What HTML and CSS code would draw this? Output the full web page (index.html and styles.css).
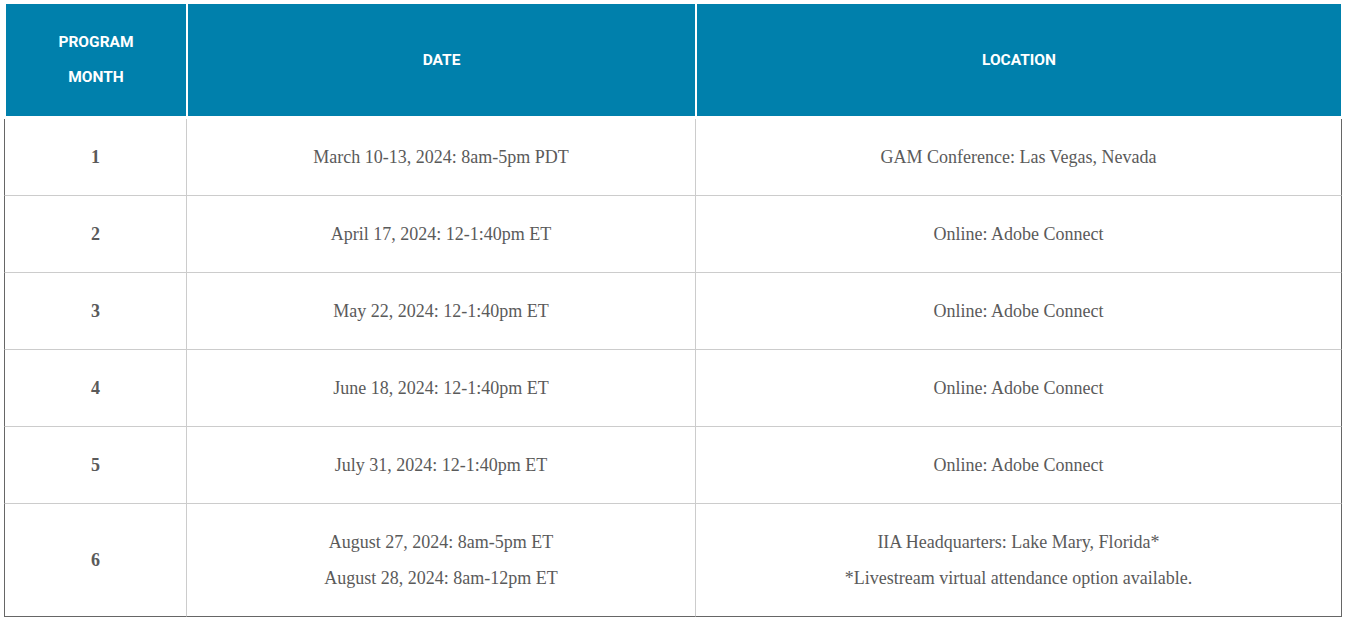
FILE: index.html
```html
<!DOCTYPE html>
<html>
<head>
<meta charset="utf-8">
<link rel="stylesheet" href="styles.css">
</head>
<body>
<div class="wrap">
<table class="sched">
  <colgroup>
    <col class="c1"><col class="c2"><col class="c3">
  </colgroup>
  <thead>
    <tr>
      <th class="h1">PROGRAM<br>MONTH</th>
      <th class="h2">DATE</th>
      <th class="h3">LOCATION</th>
    </tr>
  </thead>
  <tbody>
    <tr><td class="num">1</td><td class="mid">March 10-13, 2024: 8am-5pm PDT</td><td class="loc">GAM Conference: Las Vegas, Nevada</td></tr>
    <tr><td class="num">2</td><td class="mid">April 17, 2024: 12-1:40pm ET</td><td class="loc">Online: Adobe Connect</td></tr>
    <tr><td class="num">3</td><td class="mid">May 22, 2024: 12-1:40pm ET</td><td class="loc">Online: Adobe Connect</td></tr>
    <tr><td class="num">4</td><td class="mid">June 18, 2024: 12-1:40pm ET</td><td class="loc">Online: Adobe Connect</td></tr>
    <tr><td class="num">5</td><td class="mid">July 31, 2024: 12-1:40pm ET</td><td class="loc">Online: Adobe Connect</td></tr>
    <tr class="last"><td class="num">6</td><td class="mid">August 27, 2024: 8am-5pm ET<br>August 28, 2024: 8am-12pm ET</td><td class="loc">IIA Headquarters: Lake Mary, Florida*<br>*Livestream virtual attendance option available.</td></tr>
  </tbody>
</table>
</div>
</body>
</html>
```
FILE: styles.css
```css
html, body {
  margin: 0;
  padding: 0;
  background: #ffffff;
}
.wrap {
  padding: 4px 0 0 4px;
}
.sched {
  border-collapse: separate;
  border-spacing: 0;
  table-layout: fixed;
  width: 1338px;
}
.c1 { width: 182px; }
.c2 { width: 510px; }
.c3 { width: 646px; }
.sched th {
  background: #0080ac;
  color: #ffffff;
  font-family: Roboto, "Liberation Sans", sans-serif;
  font-weight: 700;
  font-size: 15.5px;
  line-height: 35px;
  height: 112px;
  padding: 0;
  text-align: center;
  vertical-align: middle;
  border-bottom: 3px solid #ffffff;
  box-sizing: content-box;
}
.sched th.h1 {
  border-left: 2px solid #ffffff;
}
.sched th.h2 {
  border-left: 2px solid #ffffff;
  border-right: 1px solid #ffffff;
}
.sched th.h3 {
  border-left: 1px solid #ffffff;
  border-right: 1px solid #ffffff;
}
.sched td {
  font-family: "Liberation Serif", "Times New Roman", serif;
  font-size: 18px;
  color: #5a5a5a;
  text-align: center;
  vertical-align: middle;
  padding: 0;
  height: 76px;
  line-height: 36px;
  border-bottom: 1px solid #cccccc;
  box-sizing: content-box;
}
.sched td.num {
  border-left: 1px solid #666666;
  font-weight: 700;
}
.sched td.mid {
  border-left: 1px solid #cccccc;
  border-right: 1px solid #cccccc;
}
.sched td.loc {
  border-right: 1px solid #666666;
}
.sched tr.last td {
  height: 112px;
  border-bottom: 1px solid #666666;
}
```
